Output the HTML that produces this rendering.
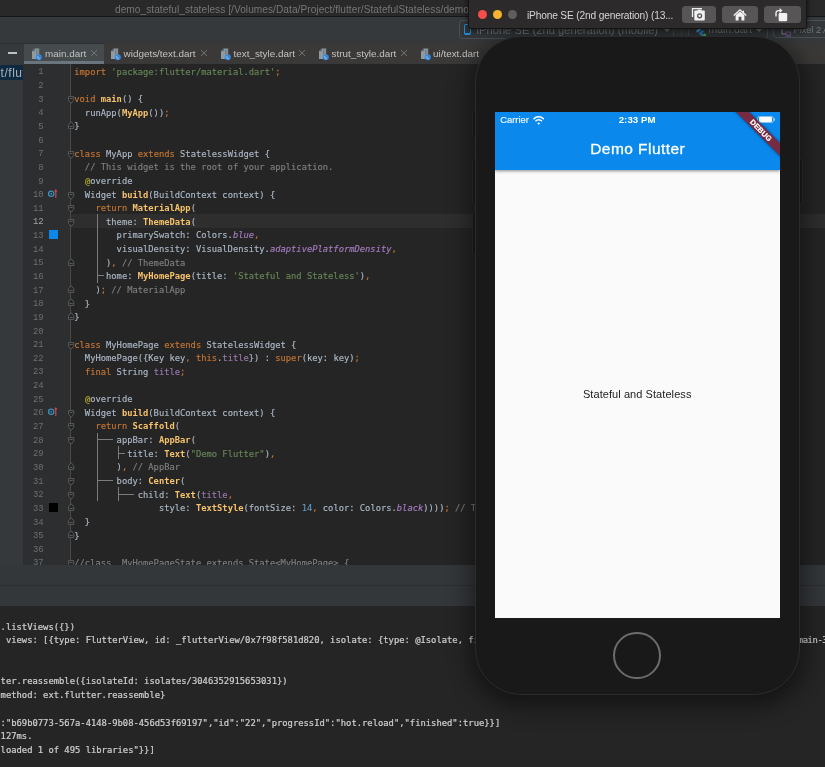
<!DOCTYPE html>
<html lang="en"><head><meta charset="utf-8"><title>demo_stateful_stateless</title>
<style>
*{box-sizing:border-box;margin:0;padding:0}
html,body{width:825px;height:767px;overflow:hidden;background:#262626}
body{position:relative;font-family:"Liberation Sans",sans-serif;color:#bbb}
.abs{position:absolute}
#titlebar{left:0;top:0;width:825px;height:17px;background:#2a292a;border-bottom:1px solid #151515}
#titlebar span{position:absolute;left:115px;top:3.6px;font-size:10.15px;color:#767676;white-space:nowrap;letter-spacing:0.05px}
#toolbar{left:0;top:17px;width:825px;height:26px;background:#35393b}
#tabs{left:0;top:43px;width:825px;height:21px;background:#35393b;border-top:1px solid #2d3032}
#leftp{left:0;top:64px;width:23px;height:501px;background:#35393b}
#gutter{left:23px;top:64px;width:48px;height:501px;background:#2c2e30;border-right:1px solid #4a4a4a}
#editor{left:71px;top:64px;width:754px;height:501px;background:#252525}
#strip{left:0;top:565px;width:825px;height:41px;background:#34373a}
#console{left:0;top:606px;width:825px;height:161px;background:#252525}
.tab{position:absolute;top:43.6px;height:20px;font-size:9.9px;color:#c2c2c2;white-space:nowrap;line-height:19px}
.tabx{position:absolute;top:44.2px;font-size:12.5px;line-height:19px;color:#6c6f71}
.tb{font-size:11.2px;color:#7b7e81;white-space:nowrap;line-height:16px}
.cl{position:absolute;left:74.3px;margin-top:-0.6px;height:13.64px;line-height:13.64px;font-family:"DejaVu Sans Mono","Liberation Mono",monospace;font-size:8.79px;-webkit-text-stroke:0.15px;white-space:pre;color:#abb8c6}
.ln{position:absolute;left:23px;width:20.5px;text-align:right;height:13.64px;line-height:13.64px;font-family:"Liberation Mono",monospace;font-size:8.8px;color:#6b7074}
.k{color:#c57633}.s{color:#668556}.c{color:#7f7f7f}.y{color:#f7c26b;font-weight:bold;-webkit-text-stroke:0}.p{color:#9a78ad}.pi{color:#a67cc0;font-style:italic}.n{color:#6494b8}.a{color:#b3ad2a}.d{color:#abb8c6}
.co{position:absolute;left:0.6px;-webkit-text-stroke:0.22px;height:13.6px;line-height:13.6px;font-family:"DejaVu Sans Mono","Liberation Mono",monospace;font-size:8.83px;white-space:pre;color:#cdcdcd}
.fold{position:absolute;left:67px;width:6px;height:6px;border:1px solid #606366;background:#252525;border-radius:1px}
.gl{position:absolute;background:#5a5a5a}
</style></head><body><div id="app" style="position:absolute;left:0;top:0;width:825px;height:767px;will-change:transform">

<div id="titlebar" class="abs"><span>demo_stateful_stateless [/Volumes/Data/Project/flutter/StatefulStateless/demo_stateful_stateless]</span></div>
<div id="toolbar" class="abs"></div>
<div id="tabs" class="abs"></div>
<div id="leftp" class="abs"></div>
<div id="gutter" class="abs"></div>
<div id="editor" class="abs"></div>
<div class="abs" style="left:71px;top:213.9px;width:754px;height:13.7px;background:#2e2e2e"></div>
<div class="ln" style="top:66.40px">1</div>
<div class="cl" style="top:66.40px"><span class="k">import </span><span class="s">'package:flutter/material.dart'</span><span class="k">;</span></div>
<div class="ln" style="top:80.04px">2</div>
<div class="ln" style="top:93.68px">3</div>
<div class="cl" style="top:93.68px"><span class="k">void </span><span class="y">main</span><span class="d">() {</span></div>
<div class="ln" style="top:107.32px">4</div>
<div class="cl" style="top:107.32px"><span class="d">  runApp(</span><span class="y">MyApp</span><span class="d">())</span><span class="k">;</span></div>
<div class="ln" style="top:120.96px">5</div>
<div class="cl" style="top:120.96px"><span class="d">}</span></div>
<div class="ln" style="top:134.60px">6</div>
<div class="ln" style="top:148.24px">7</div>
<div class="cl" style="top:148.24px"><span class="k">class </span><span class="d">MyApp </span><span class="k">extends </span><span class="d">StatelessWidget {</span></div>
<div class="ln" style="top:161.88px">8</div>
<div class="cl" style="top:161.88px"><span class="c">  // This widget is the root of your application.</span></div>
<div class="ln" style="top:175.52px">9</div>
<div class="cl" style="top:175.52px"><span class="d">  </span><span class="a">@</span><span class="d">override</span></div>
<div class="ln" style="top:189.16px">10</div>
<div class="cl" style="top:189.16px"><span class="d">  Widget </span><span class="y">build</span><span class="d">(BuildContext context) {</span></div>
<div class="ln" style="top:202.80px">11</div>
<div class="cl" style="top:202.80px"><span class="d">    </span><span class="k">return </span><span class="y">MaterialApp</span><span class="d">(</span></div>
<div class="ln" style="top:216.44px;color:#a4a3a3">12</div>
<div class="cl" style="top:216.44px"><span class="d">      theme: </span><span class="y">ThemeData</span><span class="d">(</span></div>
<div class="ln" style="top:230.08px">13</div>
<div class="cl" style="top:230.08px"><span class="d">        primarySwatch: Colors.</span><span class="pi">blue</span><span class="k">,</span></div>
<div class="ln" style="top:243.72px">14</div>
<div class="cl" style="top:243.72px"><span class="d">        visualDensity: VisualDensity.</span><span class="pi">adaptivePlatformDensity</span><span class="k">,</span></div>
<div class="ln" style="top:257.36px">15</div>
<div class="cl" style="top:257.36px"><span class="d">      )</span><span class="k">,</span><span class="c"> // ThemeData</span></div>
<div class="ln" style="top:271.00px">16</div>
<div class="cl" style="top:271.00px"><span class="d">      home: </span><span class="y">MyHomePage</span><span class="d">(title: </span><span class="s">'Stateful and Stateless'</span><span class="d">)</span><span class="k">,</span></div>
<div class="ln" style="top:284.64px">17</div>
<div class="cl" style="top:284.64px"><span class="d">    )</span><span class="k">;</span><span class="c"> // MaterialApp</span></div>
<div class="ln" style="top:298.28px">18</div>
<div class="cl" style="top:298.28px"><span class="d">  }</span></div>
<div class="ln" style="top:311.92px">19</div>
<div class="cl" style="top:311.92px"><span class="d">}</span></div>
<div class="ln" style="top:325.56px">20</div>
<div class="ln" style="top:339.20px">21</div>
<div class="cl" style="top:339.20px"><span class="k">class </span><span class="d">MyHomePage </span><span class="k">extends </span><span class="d">StatelessWidget {</span></div>
<div class="ln" style="top:352.84px">22</div>
<div class="cl" style="top:352.84px"><span class="d">  MyHomePage({Key key</span><span class="k">, this</span><span class="d">.</span><span class="p">title</span><span class="d">}) : </span><span class="k">super</span><span class="d">(key: key)</span><span class="k">;</span></div>
<div class="ln" style="top:366.48px">23</div>
<div class="cl" style="top:366.48px"><span class="d">  </span><span class="k">final </span><span class="d">String </span><span class="p">title</span><span class="k">;</span></div>
<div class="ln" style="top:380.12px">24</div>
<div class="ln" style="top:393.76px">25</div>
<div class="cl" style="top:393.76px"><span class="d">  </span><span class="a">@</span><span class="d">override</span></div>
<div class="ln" style="top:407.40px">26</div>
<div class="cl" style="top:407.40px"><span class="d">  Widget </span><span class="y">build</span><span class="d">(BuildContext context) {</span></div>
<div class="ln" style="top:421.04px">27</div>
<div class="cl" style="top:421.04px"><span class="d">    </span><span class="k">return </span><span class="y">Scaffold</span><span class="d">(</span></div>
<div class="ln" style="top:434.68px">28</div>
<div class="cl" style="top:434.68px"><span class="d">        appBar: </span><span class="y">AppBar</span><span class="d">(</span></div>
<div class="ln" style="top:448.32px">29</div>
<div class="cl" style="top:448.32px"><span class="d">          title: </span><span class="y">Text</span><span class="d">(</span><span class="s">"Demo Flutter"</span><span class="d">)</span><span class="k">,</span></div>
<div class="ln" style="top:461.96px">30</div>
<div class="cl" style="top:461.96px"><span class="d">        )</span><span class="k">,</span><span class="c"> // AppBar</span></div>
<div class="ln" style="top:475.60px">31</div>
<div class="cl" style="top:475.60px"><span class="d">        body: </span><span class="y">Center</span><span class="d">(</span></div>
<div class="ln" style="top:489.24px">32</div>
<div class="cl" style="top:489.24px"><span class="d">            child: </span><span class="y">Text</span><span class="d">(</span><span class="p">title</span><span class="k">,</span></div>
<div class="ln" style="top:502.88px">33</div>
<div class="cl" style="top:502.88px"><span class="d">                style: </span><span class="y">TextStyle</span><span class="d">(fontSize: </span><span class="n">14</span><span class="k">, </span><span class="d">color: Colors.</span><span class="pi">black</span><span class="d">))))</span><span class="k">;</span><span class="c"> // Text</span></div>
<div class="ln" style="top:516.52px">34</div>
<div class="cl" style="top:516.52px"><span class="d">  }</span></div>
<div class="ln" style="top:530.16px">35</div>
<div class="cl" style="top:530.16px"><span class="d">}</span></div>
<div class="ln" style="top:543.80px">36</div>
<div class="ln" style="top:557.44px">37</div>
<div class="cl" style="top:557.44px"><span class="c">//class _MyHomePageState extends State&lt;MyHomePage&gt; {</span></div>
<svg class="abs" style="left:67.8px;top:96.13px" width="7" height="8" viewBox="0 0 7 8"><path d="M0.55 0.55 H5.75 V4.3 L3.15 7.3 L0.55 4.3 Z" fill="#262626" stroke="#5a5c5e" stroke-width="0.95"/><path d="M1.6 2.5 H4.7" stroke="#5a5c5e" stroke-width="0.95"/></svg>
<svg class="abs" style="left:67.8px;top:150.69px" width="7" height="8" viewBox="0 0 7 8"><path d="M0.55 0.55 H5.75 V4.3 L3.15 7.3 L0.55 4.3 Z" fill="#262626" stroke="#5a5c5e" stroke-width="0.95"/><path d="M1.6 2.5 H4.7" stroke="#5a5c5e" stroke-width="0.95"/></svg>
<svg class="abs" style="left:67.8px;top:191.61px" width="7" height="8" viewBox="0 0 7 8"><path d="M0.55 0.55 H5.75 V4.3 L3.15 7.3 L0.55 4.3 Z" fill="#262626" stroke="#5a5c5e" stroke-width="0.95"/><path d="M1.6 2.5 H4.7" stroke="#5a5c5e" stroke-width="0.95"/></svg>
<svg class="abs" style="left:67.8px;top:205.25px" width="7" height="8" viewBox="0 0 7 8"><path d="M0.55 0.55 H5.75 V4.3 L3.15 7.3 L0.55 4.3 Z" fill="#262626" stroke="#5a5c5e" stroke-width="0.95"/><path d="M1.6 2.5 H4.7" stroke="#5a5c5e" stroke-width="0.95"/></svg>
<svg class="abs" style="left:67.8px;top:218.89px" width="7" height="8" viewBox="0 0 7 8"><path d="M0.55 0.55 H5.75 V4.3 L3.15 7.3 L0.55 4.3 Z" fill="#262626" stroke="#5a5c5e" stroke-width="0.95"/><path d="M1.6 2.5 H4.7" stroke="#5a5c5e" stroke-width="0.95"/></svg>
<svg class="abs" style="left:67.8px;top:341.65px" width="7" height="8" viewBox="0 0 7 8"><path d="M0.55 0.55 H5.75 V4.3 L3.15 7.3 L0.55 4.3 Z" fill="#262626" stroke="#5a5c5e" stroke-width="0.95"/><path d="M1.6 2.5 H4.7" stroke="#5a5c5e" stroke-width="0.95"/></svg>
<svg class="abs" style="left:67.8px;top:409.85px" width="7" height="8" viewBox="0 0 7 8"><path d="M0.55 0.55 H5.75 V4.3 L3.15 7.3 L0.55 4.3 Z" fill="#262626" stroke="#5a5c5e" stroke-width="0.95"/><path d="M1.6 2.5 H4.7" stroke="#5a5c5e" stroke-width="0.95"/></svg>
<svg class="abs" style="left:67.8px;top:423.49px" width="7" height="8" viewBox="0 0 7 8"><path d="M0.55 0.55 H5.75 V4.3 L3.15 7.3 L0.55 4.3 Z" fill="#262626" stroke="#5a5c5e" stroke-width="0.95"/><path d="M1.6 2.5 H4.7" stroke="#5a5c5e" stroke-width="0.95"/></svg>
<svg class="abs" style="left:67.8px;top:437.13px" width="7" height="8" viewBox="0 0 7 8"><path d="M0.55 0.55 H5.75 V4.3 L3.15 7.3 L0.55 4.3 Z" fill="#262626" stroke="#5a5c5e" stroke-width="0.95"/><path d="M1.6 2.5 H4.7" stroke="#5a5c5e" stroke-width="0.95"/></svg>
<svg class="abs" style="left:67.8px;top:478.05px" width="7" height="8" viewBox="0 0 7 8"><path d="M0.55 0.55 H5.75 V4.3 L3.15 7.3 L0.55 4.3 Z" fill="#262626" stroke="#5a5c5e" stroke-width="0.95"/><path d="M1.6 2.5 H4.7" stroke="#5a5c5e" stroke-width="0.95"/></svg>
<svg class="abs" style="left:67.8px;top:491.69px" width="7" height="8" viewBox="0 0 7 8"><path d="M0.55 0.55 H5.75 V4.3 L3.15 7.3 L0.55 4.3 Z" fill="#262626" stroke="#5a5c5e" stroke-width="0.95"/><path d="M1.6 2.5 H4.7" stroke="#5a5c5e" stroke-width="0.95"/></svg>
<svg class="abs" style="left:67.8px;top:559.89px" width="7" height="8" viewBox="0 0 7 8"><path d="M0.55 0.55 H5.75 V4.3 L3.15 7.3 L0.55 4.3 Z" fill="#262626" stroke="#5a5c5e" stroke-width="0.95"/><path d="M1.6 2.5 H4.7" stroke="#5a5c5e" stroke-width="0.95"/></svg>
<svg class="abs" style="left:67.8px;top:121.16px" width="7" height="8" viewBox="0 0 7 8"><path d="M0.55 7.45 H5.75 V3.7 L3.15 0.7 L0.55 3.7 Z" fill="#262626" stroke="#5a5c5e" stroke-width="0.95"/><path d="M1.6 5.5 H4.7" stroke="#5a5c5e" stroke-width="0.95"/></svg>
<svg class="abs" style="left:67.8px;top:257.56px" width="7" height="8" viewBox="0 0 7 8"><path d="M0.55 7.45 H5.75 V3.7 L3.15 0.7 L0.55 3.7 Z" fill="#262626" stroke="#5a5c5e" stroke-width="0.95"/><path d="M1.6 5.5 H4.7" stroke="#5a5c5e" stroke-width="0.95"/></svg>
<svg class="abs" style="left:67.8px;top:284.84px" width="7" height="8" viewBox="0 0 7 8"><path d="M0.55 7.45 H5.75 V3.7 L3.15 0.7 L0.55 3.7 Z" fill="#262626" stroke="#5a5c5e" stroke-width="0.95"/><path d="M1.6 5.5 H4.7" stroke="#5a5c5e" stroke-width="0.95"/></svg>
<svg class="abs" style="left:67.8px;top:298.48px" width="7" height="8" viewBox="0 0 7 8"><path d="M0.55 7.45 H5.75 V3.7 L3.15 0.7 L0.55 3.7 Z" fill="#262626" stroke="#5a5c5e" stroke-width="0.95"/><path d="M1.6 5.5 H4.7" stroke="#5a5c5e" stroke-width="0.95"/></svg>
<svg class="abs" style="left:67.8px;top:312.12px" width="7" height="8" viewBox="0 0 7 8"><path d="M0.55 7.45 H5.75 V3.7 L3.15 0.7 L0.55 3.7 Z" fill="#262626" stroke="#5a5c5e" stroke-width="0.95"/><path d="M1.6 5.5 H4.7" stroke="#5a5c5e" stroke-width="0.95"/></svg>
<svg class="abs" style="left:67.8px;top:462.16px" width="7" height="8" viewBox="0 0 7 8"><path d="M0.55 7.45 H5.75 V3.7 L3.15 0.7 L0.55 3.7 Z" fill="#262626" stroke="#5a5c5e" stroke-width="0.95"/><path d="M1.6 5.5 H4.7" stroke="#5a5c5e" stroke-width="0.95"/></svg>
<svg class="abs" style="left:67.8px;top:503.08px" width="7" height="8" viewBox="0 0 7 8"><path d="M0.55 7.45 H5.75 V3.7 L3.15 0.7 L0.55 3.7 Z" fill="#262626" stroke="#5a5c5e" stroke-width="0.95"/><path d="M1.6 5.5 H4.7" stroke="#5a5c5e" stroke-width="0.95"/></svg>
<svg class="abs" style="left:67.8px;top:516.72px" width="7" height="8" viewBox="0 0 7 8"><path d="M0.55 7.45 H5.75 V3.7 L3.15 0.7 L0.55 3.7 Z" fill="#262626" stroke="#5a5c5e" stroke-width="0.95"/><path d="M1.6 5.5 H4.7" stroke="#5a5c5e" stroke-width="0.95"/></svg>
<svg class="abs" style="left:67.8px;top:530.36px" width="7" height="8" viewBox="0 0 7 8"><path d="M0.55 7.45 H5.75 V3.7 L3.15 0.7 L0.55 3.7 Z" fill="#262626" stroke="#5a5c5e" stroke-width="0.95"/><path d="M1.6 5.5 H4.7" stroke="#5a5c5e" stroke-width="0.95"/></svg>
<div class="abs" style="left:97.0px;top:213.8px;width:1px;height:69.5px;background:#7c7c7c"></div>
<div class="abs" style="left:97.0px;top:275.4px;width:6.8px;height:1px;background:#7c7c7c"></div>
<div class="abs" style="left:97.2px;top:432.5px;width:1px;height:68.3px;background:#7c7c7c"></div>
<div class="abs" style="left:97.2px;top:439.2px;width:15.5px;height:1px;background:#7c7c7c"></div>
<div class="abs" style="left:97.2px;top:480.0px;width:15.5px;height:1px;background:#7c7c7c"></div>
<div class="abs" style="left:118.0px;top:446.3px;width:1px;height:13.1px;background:#7c7c7c"></div>
<div class="abs" style="left:118.0px;top:452.6px;width:6.8px;height:1px;background:#7c7c7c"></div>
<div class="abs" style="left:118.0px;top:487.0px;width:1px;height:13.8px;background:#7c7c7c"></div>
<div class="abs" style="left:118.0px;top:493.8px;width:15.8px;height:1px;background:#7c7c7c"></div>
<svg class="abs" style="left:47px;top:188.16px" width="12" height="11" viewBox="0 0 12 11"><circle cx="4.2" cy="5.8" r="2.7" fill="none" stroke="#3a93c2" stroke-width="1.2"/><circle cx="4.2" cy="5.8" r="0.9" fill="#3a93c2"/><path d="M8.8 10 V2" stroke="#d9474a" stroke-width="1.1"/><path d="M7.2 3.4 L8.8 1 L10.4 3.4 Z" fill="#d9474a"/></svg>
<svg class="abs" style="left:47px;top:406.40px" width="12" height="11" viewBox="0 0 12 11"><circle cx="4.2" cy="5.8" r="2.7" fill="none" stroke="#3a93c2" stroke-width="1.2"/><circle cx="4.2" cy="5.8" r="0.9" fill="#3a93c2"/><path d="M8.8 10 V2" stroke="#d9474a" stroke-width="1.1"/><path d="M7.2 3.4 L8.8 1 L10.4 3.4 Z" fill="#d9474a"/></svg>
<div class="abs" style="left:49.3px;top:230.2px;width:9.2px;height:8.8px;background:#0a88eb"></div>
<div class="abs" style="left:49.3px;top:503px;width:9.2px;height:8.8px;background:#000"></div>
<div id="strip" class="abs"><div class="abs" style="left:0;top:20px;width:825px;height:1px;background:#2c2f31"></div></div>
<div id="console" class="abs"></div>
<div class="co" style="top:620.75px">.listViews({})</div>
<div class="co" style="top:634.43px"> views: [{type: FlutterView, id: _flutterView/0x7f98f581d820, isolate: {type: @Isolate, fixedId: true, id: isolates/3046352915653031, name: main.dart$<span style="letter-spacing:-0.43px">main-3046352915653031}}]</span></div>
<div class="co" style="top:675.49px">ter.reassemble({isolateId: isolates/3046352915653031})</div>
<div class="co" style="top:689.17px">method: ext.flutter.reassemble}</div>
<div class="co" style="top:716.54px">:"b69b0773-567a-4148-9b08-456d53f69197","id":"22","progressId":"hot.reload","finished":true}}]</div>
<div class="co" style="top:730.23px">127ms.</div>
<div class="co" style="top:743.91px">loaded 1 of 495 libraries"}}]</div>
<div class="abs" style="left:103.5px;top:43.4px;width:722px;height:19.8px;background:#3a3938"></div>
<div class="abs" style="left:23.5px;top:43.5px;width:80px;height:18px;background:#454a4d"></div>
<div class="abs" style="left:23.5px;top:61.4px;width:80px;height:2.5px;background:#6b757e"></div>
<svg class="abs" style="left:31.0px;top:47.5px" width="12" height="14" viewBox="0 0 12 14"><path d="M1 3.2 L3.8 0.5 L8.2 0.5 L8.2 11 L1 11 Z" fill="#8f9ba3"/><path d="M1 3.2 L3.8 3.2 L3.8 0.5 Z" fill="#5d676e"/><rect x="5" y="1.5" width="1" height="5" fill="#6f7a82"/><rect x="6.6" y="1.5" width="0.8" height="5" fill="#6f7a82"/><circle cx="7.8" cy="9.3" r="3" fill="#3a86d8"/><path d="M6 8.3 L8.6 11.2" stroke="#86bdf3" stroke-width="1.2" fill="none"/></svg>
<div class="tab" style="left:45.0px">main.dart</div>
<svg class="abs" style="left:90.0px;top:49.3px" width="8" height="8" viewBox="0 0 8 8"><path d="M1 1 L7 7 M7 1 L1 7" stroke="#6e7174" stroke-width="1" fill="none"/></svg>
<svg class="abs" style="left:110.0px;top:47.5px" width="12" height="14" viewBox="0 0 12 14"><path d="M1 3.2 L3.8 0.5 L8.2 0.5 L8.2 11 L1 11 Z" fill="#8f9ba3"/><path d="M1 3.2 L3.8 3.2 L3.8 0.5 Z" fill="#5d676e"/><rect x="5" y="1.5" width="1" height="5" fill="#6f7a82"/><rect x="6.6" y="1.5" width="0.8" height="5" fill="#6f7a82"/><circle cx="7.8" cy="9.3" r="3" fill="#3a86d8"/><path d="M6 8.3 L8.6 11.2" stroke="#86bdf3" stroke-width="1.2" fill="none"/></svg>
<div class="tab" style="left:123.6px">widgets/text.dart</div>
<svg class="abs" style="left:199.8px;top:49.3px" width="8" height="8" viewBox="0 0 8 8"><path d="M1 1 L7 7 M7 1 L1 7" stroke="#6e7174" stroke-width="1" fill="none"/></svg>
<svg class="abs" style="left:220.0px;top:47.5px" width="12" height="14" viewBox="0 0 12 14"><path d="M1 3.2 L3.8 0.5 L8.2 0.5 L8.2 11 L1 11 Z" fill="#8f9ba3"/><path d="M1 3.2 L3.8 3.2 L3.8 0.5 Z" fill="#5d676e"/><rect x="5" y="1.5" width="1" height="5" fill="#6f7a82"/><rect x="6.6" y="1.5" width="0.8" height="5" fill="#6f7a82"/><circle cx="7.8" cy="9.3" r="3" fill="#3a86d8"/><path d="M6 8.3 L8.6 11.2" stroke="#86bdf3" stroke-width="1.2" fill="none"/></svg>
<div class="tab" style="left:233.5px">text_style.dart</div>
<svg class="abs" style="left:297.8px;top:49.3px" width="8" height="8" viewBox="0 0 8 8"><path d="M1 1 L7 7 M7 1 L1 7" stroke="#6e7174" stroke-width="1" fill="none"/></svg>
<svg class="abs" style="left:318.0px;top:47.5px" width="12" height="14" viewBox="0 0 12 14"><path d="M1 3.2 L3.8 0.5 L8.2 0.5 L8.2 11 L1 11 Z" fill="#8f9ba3"/><path d="M1 3.2 L3.8 3.2 L3.8 0.5 Z" fill="#5d676e"/><rect x="5" y="1.5" width="1" height="5" fill="#6f7a82"/><rect x="6.6" y="1.5" width="0.8" height="5" fill="#6f7a82"/><circle cx="7.8" cy="9.3" r="3" fill="#3a86d8"/><path d="M6 8.3 L8.6 11.2" stroke="#86bdf3" stroke-width="1.2" fill="none"/></svg>
<div class="tab" style="left:331.5px">strut_style.dart</div>
<svg class="abs" style="left:400.0px;top:49.3px" width="8" height="8" viewBox="0 0 8 8"><path d="M1 1 L7 7 M7 1 L1 7" stroke="#6e7174" stroke-width="1" fill="none"/></svg>
<svg class="abs" style="left:419.5px;top:47.5px" width="12" height="14" viewBox="0 0 12 14"><path d="M1 3.2 L3.8 0.5 L8.2 0.5 L8.2 11 L1 11 Z" fill="#8f9ba3"/><path d="M1 3.2 L3.8 3.2 L3.8 0.5 Z" fill="#5d676e"/><rect x="5" y="1.5" width="1" height="5" fill="#6f7a82"/><rect x="6.6" y="1.5" width="0.8" height="5" fill="#6f7a82"/><circle cx="7.8" cy="9.3" r="3" fill="#3a86d8"/><path d="M6 8.3 L8.6 11.2" stroke="#86bdf3" stroke-width="1.2" fill="none"/></svg>
<div class="tab" style="left:433.0px">ui/text.dart</div>
<svg class="abs" style="left:490.0px;top:49.3px" width="8" height="8" viewBox="0 0 8 8"><path d="M1 1 L7 7 M7 1 L1 7" stroke="#6e7174" stroke-width="1" fill="none"/></svg>
<div class="abs" style="left:8px;top:52.3px;width:9px;height:1.6px;background:#c0c0c0"></div>
<div class="abs" style="left:0;top:64.6px;width:23px;height:15.4px;background:#0d2a40;overflow:hidden"><span style="position:absolute;left:-4.05px;top:1.1px;font-size:12px;letter-spacing:0.55px;color:#aab2b9;white-space:nowrap">rt/flutter</span></div>
<div class="abs" style="left:458.5px;top:20px;width:215.5px;height:18.5px;border:1px solid #4b4f51;border-radius:3px;background:#33373a"></div>
<div class="abs" style="left:464px;top:23.5px;width:7px;height:11.5px;border:1.9px solid #1e8fd6;border-bottom-width:2.6px;border-radius:1.8px"></div>
<div class="abs tb" style="left:476.5px;top:21.5px">iPhone SE (2nd generation) (mobile)</div>
<div class="abs" style="left:663.7px;top:28.6px;width:0;height:0;border-left:3px solid transparent;border-right:3px solid transparent;border-top:3.6px solid #76797b"></div>
<div class="abs" style="left:688px;top:20px;width:79.5px;height:18.5px;border:1px solid #4b4f51;border-radius:3px;background:#33373a"></div><div class="abs" style="left:681.2px;top:21px;width:1px;height:17px;background:#45494b"></div>
<svg class="abs" style="left:695.3px;top:24.6px" width="12" height="12" viewBox="0 0 12 12"><path d="M6.5 0.5 L1 6 L2.7 7.7 L9.9 0.5 Z" fill="#45a6e8"/><path d="M6.5 5.5 L3.7 8.3 L6.5 11 L9.9 11 L7.2 8.3 L9.9 5.5 Z" fill="#2f7fc0"/><circle cx="9.6" cy="10" r="1.5" fill="#3fbf4a"/></svg>
<div class="abs tb" style="left:708.5px;top:21.5px;font-size:10.4px">main.dart</div>
<div class="abs" style="left:756px;top:28.6px;width:0;height:0;border-left:3px solid transparent;border-right:3px solid transparent;border-top:3.6px solid #76797b"></div>
<div class="abs" style="left:773px;top:20px;width:60px;height:17.6px;border:1px solid #4b4f51;border-radius:3px;background:#33373a"></div>
<div class="abs tb" style="left:793.5px;top:21.9px;font-size:9.2px;color:#74777a">Pixel 2 API</div>
<svg class="abs" style="left:780.5px;top:25.6px" width="12" height="12" viewBox="0 0 12 12"><path d="M1 1 V8 H5" stroke="#7d8286" stroke-width="1.1" fill="none"/><rect x="5" y="6" width="4.4" height="3.2" fill="none" stroke="#6f4f8f" stroke-width="0.9"/><path d="M4.5 10.3 H10" stroke="#6f4f8f" stroke-width="0.8"/></svg>
<div class="abs" style="left:471.5px;top:110.4px;width:5px;height:26.6px;background:#1d1d1d;border:1px solid #303030;border-radius:2px"></div>
<div class="abs" style="left:471.5px;top:159px;width:5px;height:46px;background:#1d1d1d;border:1px solid #303030;border-radius:2px"></div>
<div class="abs" style="left:471.5px;top:210.8px;width:5px;height:45.6px;background:#1d1d1d;border:1px solid #303030;border-radius:2px"></div>
<div class="abs" style="left:798.2px;top:158.8px;width:5px;height:46px;background:#1d1d1d;border:1px solid #303030;border-radius:2px"></div>
<div id="phone" class="abs" style="left:474.5px;top:36.3px;width:325.5px;height:658.7px;border-radius:46px;background:#191919;border:1px solid #2c2c2c;box-shadow:0 6px 22px 6px rgba(0,0,0,0.45)"></div>
<div id="screen" class="abs" style="left:495.2px;top:112.4px;width:284.8px;height:505.8px;background:#fafafa;overflow:hidden">
<div class="abs" style="left:0;top:0;width:285px;height:57.4px;background:#0a88eb;box-shadow:0 1px 3px rgba(0,0,0,0.45)"></div>
<div class="abs" style="left:5px;top:2.1px;font-size:9.4px;color:#e8f2fc;-webkit-text-stroke:0.2px #e8f2fc;white-space:nowrap">Carrier</div>
<svg class="abs" style="left:37.6px;top:3.2px" width="11.4" height="9" viewBox="0 0 12 9" preserveAspectRatio="none"><path d="M0.6 3.1 A7.6 7.6 0 0 1 11.4 3.1" stroke="#fff" stroke-width="1.5" fill="none"/><path d="M2.6 5.2 A4.8 4.8 0 0 1 9.4 5.2" stroke="#fff" stroke-width="1.5" fill="none"/><path d="M4.5 7.2 A2.1 2.1 0 0 1 7.5 7.2 L6 8.8 Z" fill="#fff"/></svg>
<div class="abs" style="left:123.5px;top:1.7px;font-size:9.6px;font-weight:bold;color:#fff;white-space:nowrap;letter-spacing:0.1px">2:33 PM</div>
<div class="abs" style="left:262.2px;top:3.4px;width:16.4px;height:7.6px;border:1px solid rgba(255,255,255,0.5);border-radius:2.5px"></div><div class="abs" style="left:263.8px;top:4.9px;width:13.2px;height:4.7px;background:#fff;border-radius:1.3px"></div><div class="abs" style="left:279.2px;top:5.8px;width:1.1px;height:2.8px;background:rgba(255,255,255,0.6);border-radius:0 1px 1px 0"></div>
<div class="abs" style="left:0;top:28px;width:285px;text-align:center;font-size:15.5px;letter-spacing:0.45px;color:#fff;white-space:nowrap;-webkit-text-stroke:0.3px #fff">Demo Flutter</div>
<div class="abs" style="left:231.3px;top:13.55px;width:70px;height:9px;background:#762b42;transform:rotate(45deg);transform-origin:center;color:#fff;font-size:7.4px;font-weight:bold;text-align:center;line-height:9.6px;-webkit-text-stroke:0.2px #fff;letter-spacing:0.15px;box-shadow:0 0 3px rgba(0,0,0,0.6)">DEBUG</div>
<div class="abs" style="left:0;top:275.5px;left:-0.5px;width:285px;text-align:center;font-size:11px;letter-spacing:0.07px;color:#1c1c1c;white-space:nowrap">Stateful and Stateless</div>
</div>
<div class="abs" style="left:613.4px;top:631.6px;width:47.6px;height:47.6px;border-radius:50%;border:2.6px solid #6c6c6c"></div>
<div class="abs" style="left:468.2px;top:-6px;width:339.3px;height:35px;background:#2c2a2b;border-radius:3px;border:1px solid #151414;box-shadow:0 2px 6px rgba(0,0,0,0.6)"></div>
<div class="abs" style="left:477.6px;top:9.8px;width:9.4px;height:9.4px;border-radius:50%;background:#f44d4b"></div>
<div class="abs" style="left:492.7px;top:9.8px;width:9.4px;height:9.4px;border-radius:50%;background:#f7b32e"></div>
<div class="abs" style="left:507.8px;top:9.8px;width:9.4px;height:9.4px;border-radius:50%;background:#5f5d5e"></div>
<div class="abs" style="left:527px;top:9.8px;font-size:10.2px;color:#d6d4d5;white-space:nowrap;letter-spacing:-0.17px">iPhone SE (2nd generation) (13...</div>
<div class="abs" style="left:682.0px;top:6px;width:33.7px;height:16.5px;border-radius:3.5px;background:#575556"></div>
<div class="abs" style="left:721.8px;top:6px;width:36.4px;height:16.5px;border-radius:3.5px;background:#575556"></div>
<div class="abs" style="left:764.0px;top:6px;width:36.8px;height:16.5px;border-radius:3.5px;background:#575556"></div>
<svg class="abs" style="left:691px;top:7.4px" width="16" height="15" viewBox="0 0 16 15"><path d="M1.5 10 V1.7 H11" stroke="#efefef" stroke-width="1.3" fill="none"/><rect x="3.3" y="3.6" width="10.5" height="9.8" rx="1" fill="#f2f2f2"/><rect x="6.5" y="2.6" width="4" height="2" fill="#f2f2f2"/><circle cx="8.6" cy="8.8" r="2.6" fill="#575556"/><circle cx="8.6" cy="8.8" r="1.3" fill="#f2f2f2"/></svg>
<svg class="abs" style="left:733.2px;top:8.5px" width="14" height="12.6" viewBox="0 0 16 14"><path d="M0.8 7.2 L8 0.8 L15.2 7.2" stroke="#f2f2f2" stroke-width="1.5" fill="none"/><path d="M3 6.8 L8 2.6 L13 6.8 V13 H9.6 V8.6 H6.4 V13 H3 Z" fill="#f2f2f2"/><rect x="11" y="1.8" width="1.6" height="3" fill="#f2f2f2"/></svg>
<svg class="abs" style="left:773px;top:6.9px" width="16" height="15" viewBox="0 0 16 15"><rect x="5.6" y="6" width="8.6" height="8.2" rx="1.3" fill="#f2f2f2"/><path d="M3 9.5 V6.2 A2.6 2.6 0 0 1 5.6 3.6 H7" stroke="#f2f2f2" stroke-width="1.4" fill="none"/><path d="M6.6 0.9 L9.4 3.6 L6.6 6.2 Z" fill="#f2f2f2"/></svg>
</div></body></html>
